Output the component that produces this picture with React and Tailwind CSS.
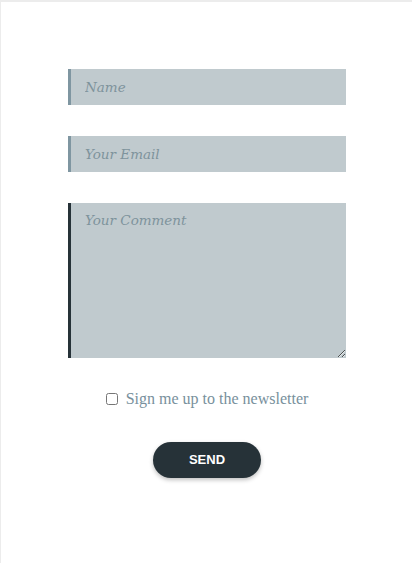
import React, { useState } from 'react';

const fieldBase =
  'w-full bg-[#c0cace] border-0 border-l-[3px] px-[14px] text-[13.5px] text-[#263238] outline-none placeholder:italic placeholder:text-[#7e939c] font-["DejaVu_Serif",serif]';

const App = () => {
  const [name, setName] = useState('');
  const [email, setEmail] = useState('');
  const [comment, setComment] = useState('');
  const [news, setNews] = useState(false);

  return (
    <div className="min-h-[563px] bg-[#ececec] pt-[2px] pl-px" style={{ fontFamily: '"Liberation Serif", "DejaVu Serif", serif' }}>
      <div className="min-h-[561px] bg-white pl-[67px] pt-[67px] pr-[66px]">
        <form onSubmit={(e) => e.preventDefault()} className="flex flex-col">
          <input
            type="text"
            placeholder="Name"
            value={name}
            onChange={(e) => setName(e.target.value)}
            className={fieldBase + ' h-[36px] border-[#7f96a1]'}
          />
          <input
            type="email"
            placeholder="Your Email"
            value={email}
            onChange={(e) => setEmail(e.target.value)}
            className={fieldBase + ' h-[36px] mt-[31px] border-[#7f96a1]'}
          />
          <textarea
            placeholder="Your Comment"
            value={comment}
            onChange={(e) => setComment(e.target.value)}
            className={fieldBase + ' h-[155px] mt-[31px] pt-[7px] border-[#263238] block'}
          />
          <label className="mt-[29px] flex items-center justify-center gap-[8px] text-[16px] leading-[24px] text-[#78909c] cursor-pointer">
            <input
              type="checkbox"
              checked={news}
              onChange={(e) => setNews(e.target.checked)}
              className="w-[12px] h-[12px] m-0"
            />
            <span>Sign me up to the newsletter</span>
          </label>
          <div className="flex justify-center mt-[31px]">
            <button
              type="submit"
              className="w-[108px] h-[36px] rounded-full bg-[#263238] text-white text-[13px] font-bold shadow-[0_2px_4px_rgba(0,0,0,0.25)]"
              style={{ fontFamily: '"Liberation Sans", Arial, sans-serif' }}
            >
              SEND
            </button>
          </div>
        </form>
      </div>
    </div>
  );
};

export default App;
